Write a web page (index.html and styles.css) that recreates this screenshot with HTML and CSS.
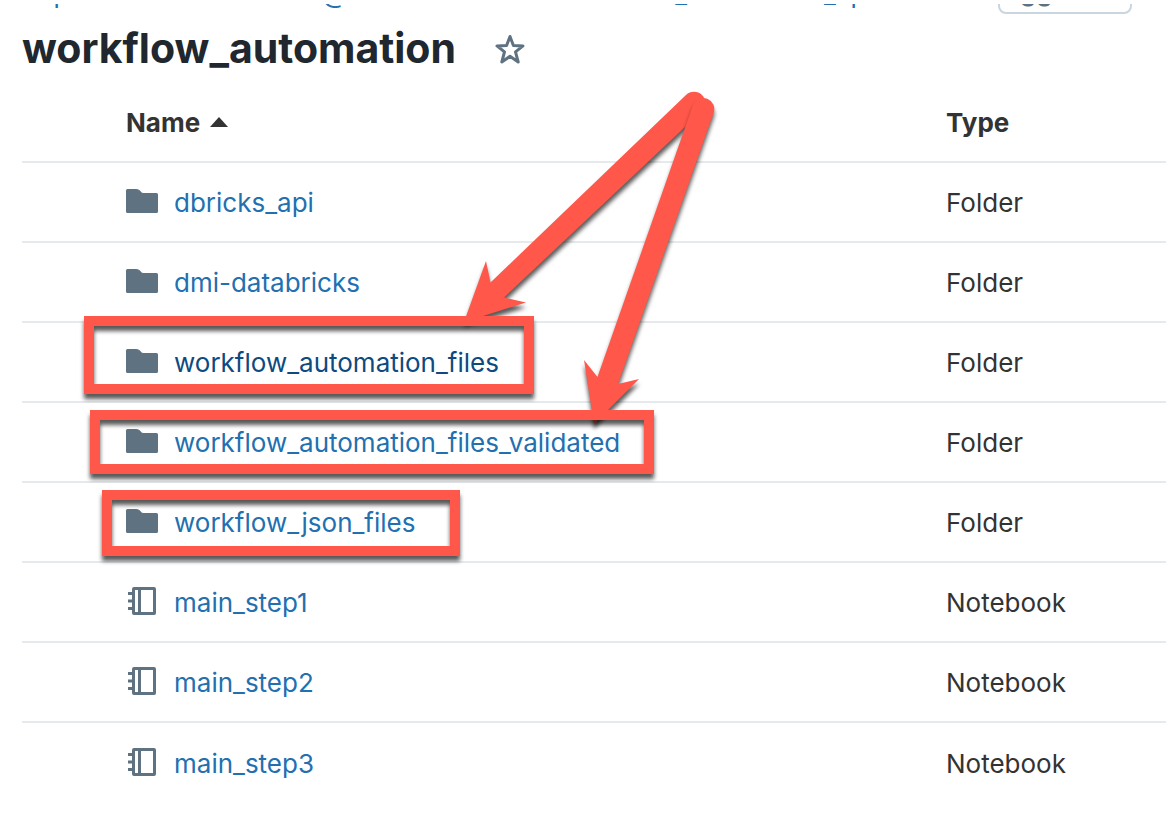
FILE: index.html
```html
<!DOCTYPE html>
<html lang="en">
<head>
<meta charset="utf-8">
<title>workflow_automation</title>
<link rel="stylesheet" href="styles.css">
</head>
<body>
<svg class="symbols" aria-hidden="true">
  <symbol id="folder" viewBox="0 0 32 24"><path d="M1.500 0H10c2.500 0 3.500 1 5 2.800C16 4 16.500 4 17.500 4H30.500Q32 4 32 5.500V22.500Q32 24 30.500 24H1.500Q0 24 0 22.500V1.500Q0 0 1.500 0Z" fill="#5f7281"/></symbol>
  <symbol id="notebook" viewBox="0 0 32 28"><g fill="none" stroke="#5f7281"><rect x="7.500" y="1.500" width="21" height="25" rx="0.500" stroke-width="3"/><path d="M13.500 1V27" stroke-width="3"/><path d="M2 6.500H7M2 14H7M2 21.500H7" stroke-width="3"/></g></symbol>
</svg>
<div class="page">
  <div class="topbar">
    <nav class="crumbs" aria-label="Breadcrumb">
      <a href="#">Repos</a>
      <a href="#">@databricks.com</a>
      <a href="#">workflow_automation_api</a>
    </nav>
    <button class="branch" type="button">gg</button>
  </div>
  <header class="heading">
    <h1>workflow_automation</h1>
    <button class="star" type="button" aria-label="Add to favorites">
      <svg viewBox="0 0 32 32" width="32" height="32"><path d="M16 3.500L19.400 12.500L29 12.900L21.500 18.900L24.200 29L16 23.300L7.800 29L10.500 18.900L3 12.900L12.600 12.500Z" fill="none" stroke="#5f7281" stroke-width="3" stroke-linejoin="round"/></svg>
    </button>
  </header>
  <table class="files">
    <thead>
      <tr><th class="name" scope="col">Name <svg class="sort" viewBox="0 0 18 10" width="18" height="10"><path d="M9 0L18 10H0Z" fill="#333"/></svg></th><th scope="col">Type</th></tr>
    </thead>
    <tbody>
      <tr><td><a href="#"><svg class="icon"><use href="#folder"/></svg>dbricks_api</a></td><td>Folder</td></tr>
      <tr><td><a href="#"><svg class="icon"><use href="#folder"/></svg>dmi-databricks</a></td><td>Folder</td></tr>
      <tr><td><a class="active" href="#"><svg class="icon"><use href="#folder"/></svg>workflow_automation_files</a></td><td>Folder</td></tr>
      <tr><td><a href="#"><svg class="icon"><use href="#folder"/></svg>workflow_automation_files_validated</a></td><td>Folder</td></tr>
      <tr><td><a href="#"><svg class="icon"><use href="#folder"/></svg>workflow_json_files</a></td><td>Folder</td></tr>
      <tr><td><a href="#"><svg class="icon book"><use href="#notebook"/></svg>main_step1</a></td><td>Notebook</td></tr>
      <tr><td><a href="#"><svg class="icon book"><use href="#notebook"/></svg>main_step2</a></td><td>Notebook</td></tr>
      <tr><td><a href="#"><svg class="icon book"><use href="#notebook"/></svg>main_step3</a></td><td>Notebook</td></tr>
    </tbody>
  </table>
  <svg class="marks" viewBox="0 0 1170 822" width="1170" height="822" aria-hidden="true">
    <path class="shade" d="M686 95A11 11 0 0 1 702 111L504 297.500L526 302.500L464 322L486 261L490.500 282.500Z"/>
    <path class="shade" d="M693 105A11 11 0 0 1 713.500 113L618 384L639 379L594 424L584 360L597.500 377Z"/>
    <path class="shade" fill-rule="evenodd" d="M84 316H534V394H84ZM94 326V384H524V326Z"/>
    <path class="shade" fill-rule="evenodd" d="M90 410H654V474H90ZM100 420V464H644V420Z"/>
    <path class="shade" fill-rule="evenodd" d="M102 490H460V556H102ZM112 500V546H450V500Z"/>
  </svg>
</div>
</body>
</html>
```
FILE: styles.css
```css
* {
  box-sizing: border-box;
}

body {
  margin: 0;
  background: #fff;
  color: #333;
  font-family: Inter, "Liberation Sans", sans-serif;
  font-size: 26px;
  line-height: 32px;
}

a {
  color: #2270b0;
  text-decoration: none;
}

button {
  background: none;
  font: inherit;
}

.symbols {
  position: absolute;
  width: 0;
  height: 0;
}

.page {
  position: relative;
  padding: 4px 4px 0 22px;
}

.topbar {
  display: flex;
  align-items: flex-end;
  justify-content: space-between;
  height: 10px;
  padding-right: 34px;
  overflow: hidden;
}

.crumbs {
  display: grid;
  grid-template-columns: 300px 240px auto;
  padding-bottom: 4px;
}

.branch {
  width: 134px;
  height: 48px;
  padding: 8px 20px;
  border: 2px solid #c9d6e0;
  border-radius: 8px;
  color: #5f7281;
  font-weight: 600;
  text-align: left;
}

.heading {
  display: flex;
  align-items: center;
  gap: 38px;
  height: 68px;
  padding-top: 2px;
}

h1 {
  margin: 0;
  padding-bottom: 3px;
  color: #20272e;
  font-size: 41px;
  font-weight: 700;
  line-height: 52px;
}

.star {
  display: flex;
  padding: 0;
  border: 0;
}

.files {
  width: 100%;
  table-layout: fixed;
  border-collapse: collapse;
}

.files th,
.files td {
  height: 80px;
  padding: 2px 0 0;
  border-bottom: 2px solid #e6eaed;
  text-align: left;
}

.files th {
  font-weight: 700;
}

.files th:last-child {
  width: 220px;
}

.files th.name {
  padding-left: 104px;
}

.files td:first-child {
  padding-left: 104px;
}

.files tbody tr:last-child td {
  border-bottom: 0;
}

.sort {
  margin-left: 4px;
  vertical-align: 5px;
}

.files a {
  display: flex;
  align-items: center;
  gap: 16px;
}

.files a.active {
  color: #0e4a80;
}

.icon {
  width: 32px;
  height: 24px;
  margin-bottom: 4px;
}

.icon.book {
  height: 28px;
}

.marks {
  position: absolute;
  top: 0;
  left: 0;
  pointer-events: none;
}

.shade {
  fill: #ff574a;
  filter: drop-shadow(0 5px 2px rgba(0, 0, 0, 0.65));
}
```
